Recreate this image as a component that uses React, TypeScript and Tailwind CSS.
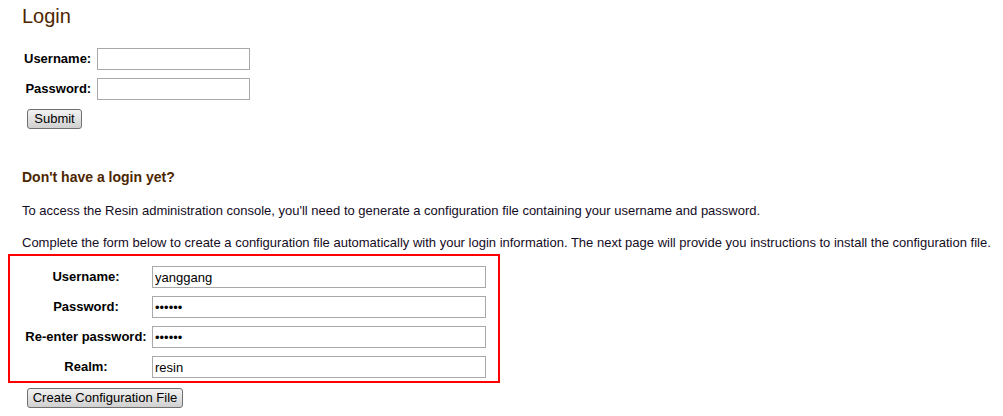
const font = { fontFamily: '"Liberation Sans", Arial, sans-serif' }

function LoginRow({ label, type }: { label: string; type: string }) {
  return (
    <tr>
      <td className="h-[30px] pr-[6px] text-right align-middle text-[13px] font-bold text-black">{label}</td>
      <td className="align-middle">
        <input type={type} className="block h-[22px] w-[153px] border border-[#a9a9a9] bg-white px-[2px] text-[13px] outline-none" />
      </td>
    </tr>
  )
}

function ConfigRow({ label, type, value }: { label: string; type: string; value: string }) {
  return (
    <div className="flex h-[22px] items-center gap-[4px]">
      <label className="w-[124px] text-center text-[13px] font-bold text-black">{label}</label>
      <input
        type={type}
        defaultValue={value}
        className="block h-[22px] w-[334px] border border-[#a9a9a9] bg-white px-[2px] text-[13px] text-black outline-none"
      />
    </div>
  )
}

export default function App() {
  return (
    <div className="h-[416px] w-[1003px] overflow-hidden bg-white" style={font}>
      <div className="pl-[22px] pt-[4px]">
        <h1 className="text-[20px] leading-[24px] text-[#4d2600]">Login</h1>
        <table className="ml-[2px] mt-[16px] border-collapse">
          <tbody>
            <LoginRow label="Username:" type="text" />
            <LoginRow label="Password:" type="password" />
          </tbody>
        </table>
        <button className="mt-[5px] ml-[5px] block h-[20px] w-[55px] rounded-[3px] border border-[#707070] bg-gradient-to-b from-[#f2f2f2] to-[#d0d0d0] text-[13px] leading-[18px] text-black">
          Submit
        </button>
        <h2 className="mt-[40px] text-[14px] font-bold leading-[17px] text-[#4d2600]">Don&apos;t have a login yet?</h2>
        <p className="mt-[17px] text-[13px] leading-[15px] text-[#140c24]">
          To access the Resin administration console, you&apos;ll need to generate a configuration file containing your username and password.
        </p>
        <p className="mt-[17px] text-[13px] leading-[15px] text-[#140c24]">
          Complete the form below to create a configuration file automatically with your login information. The next page will provide you instructions to install the configuration file.
        </p>
      </div>
      <div className="ml-[8px] mt-[4px] flex w-[492px] flex-col gap-[8px] border-2 border-[#ff0000] pb-[3px] pl-[14px] pt-[10px]">
        <ConfigRow label="Username:" type="text" value="yanggang" />
        <ConfigRow label="Password:" type="password" value="resin1" />
        <ConfigRow label="Re-enter password:" type="password" value="resin1" />
        <ConfigRow label="Realm:" type="text" value="resin" />
      </div>
      <button className="ml-[27px] mt-[5px] block h-[20px] w-[156px] rounded-[3px] border border-[#707070] bg-gradient-to-b from-[#f2f2f2] to-[#d0d0d0] text-[13px] leading-[18px] text-black">
        Create Configuration File
      </button>
    </div>
  )
}
